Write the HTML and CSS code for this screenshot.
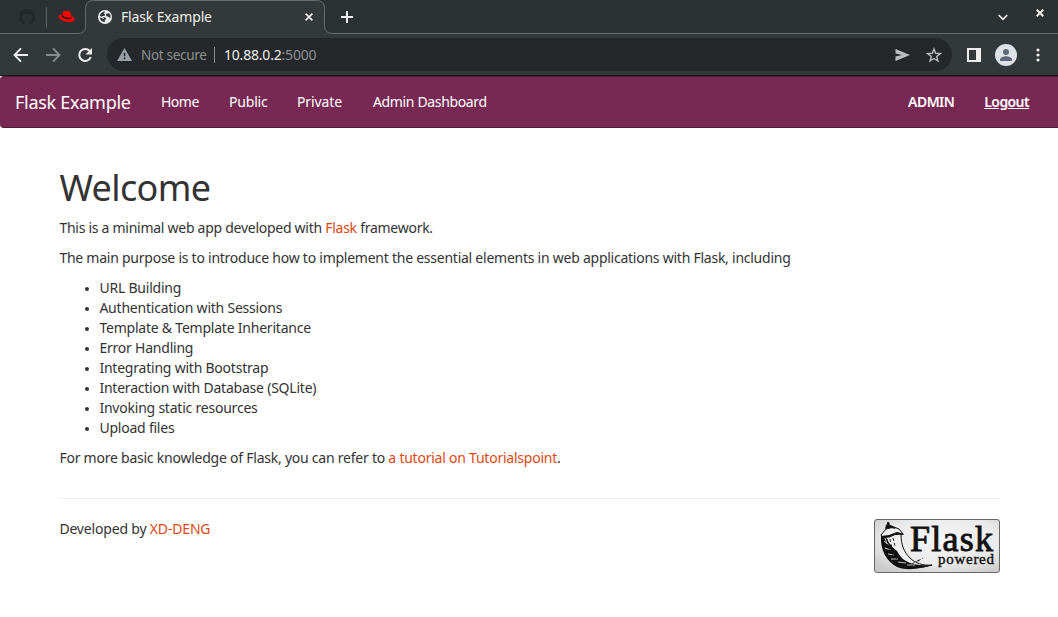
FILE: index.html
```html
<!DOCTYPE html>
<html lang="en">
<head>
<meta charset="utf-8">
<title>Flask Example</title>
<link rel="stylesheet" href="styles.css">
</head>
<body>
<header class="browser">
  <div class="tabs">
    <div class="pinned">
      <svg class="github" width="16" height="16" viewBox="0 0 16 16"><path fill="#232729" d="M8 0a8 8 0 0 0-2.5 15.600c.4 0 .5-.2.500-.4v-1.500c-2 .4-2.600-.9-2.700-1-.3-.5-.6-.8-.9-1 .8-.3 1.400.5 1.700 1 .5.700 1.200.7 2 .5.1-.5.300-.8.500-1C4.500 12 3 11.300 3 8.200c0-.8.300-1.500.8-2-.2-.700-.1-1.400.1-2 .7 0 1.400.4 2.100.8a7 7 0 0 1 4 0c.700-.4 1.400-.8 2.100-.8.2.6.300 1.300.1 2 .5.500.8 1.200.8 2 0 3.100-1.600 3.800-3.600 4 .3.300.6.800.6 1.500v1.500c0 .2.100.5.500.4A8 8 0 0 0 8 0z"/></svg>
      <i class="divider"></i>
      <svg class="hat" width="17" height="14" viewBox="0 0 17 14"><path fill="#f00" d="M4.200 5.500C4.600 3 5 1 6 .8c1 0 1.300.5 2.200.4 1.200-.2 2-.5 3.200.2 1.400.8 1.500 2.800 2 4.600 1.900.7 3.200 2 3.100 3.400-.2 2-3.200 3-6.300 2.700C5.800 11.700.600 9 .5 6.500c0-1.400 1.700-1.800 3.700-1z"/><path fill="none" stroke="#111" stroke-width="1.400" d="M3.800 5.500c1.600 2.300 7 4.300 9.700 2.300"/></svg>
    </div>
    <svg class="tab-outline" width="1058" height="34" viewBox="0 0 1058 34"><path fill="#33393b" d="M78 34q7.500 0 7.500-7V8.500q0-8 8-8H316.500q8 0 8 8V26q0 8 8 8z"/><path fill="none" stroke="#686c6d" d="M0 33.500H78q7.500 0 7.500-7V8.500q0-8 8-8H316.500q8 0 8 8V25.500q0 8 8 8H1058"/></svg>
    <div class="tab">
      <svg width="14" height="14" viewBox="0 0 14 14"><circle cx="7" cy="7" r="7" fill="#eeeeec"/><path fill="#33393b" d="M7.200 1.500 6 3.500l1.200 1.200-.8 1.200-2.400.1.500 1.200H7l1.300 1.500-1.500 1.500v2c-2.700-.2-5-2-5.200-4.600l2.600.5.500 1 1.400-.8L4.700 7 3 6.600 1.700 5.600C2.400 3.200 4.400 1.500 7.200 1.500zM9 3.200l1 .4 1-.6 1.200 1.700.5 3-1.700-.1-1-1.200-1.700-.2-.4-1.500z"/></svg>
      <span class="tab-title">Flask Example</span>
      <svg class="tab-close" width="8" height="8" viewBox="0 0 8 8"><path stroke="#eeeeec" stroke-width="1.700" d="M.6.6l6.800 6.800M7.400.6.600 7.400"/></svg>
    </div>
    <svg class="plus" width="12" height="12" viewBox="0 0 12 12"><path stroke="#eeeeec" stroke-width="2" d="M6 0v12M0 6h12"/></svg>
    <div class="window-buttons">
      <svg width="10" height="7" viewBox="0 0 10 7"><path fill="none" stroke="#eeeeec" stroke-width="1.700" d="M.7 1l4.300 4.300L9.300 1"/></svg>
      <svg class="window-close" width="8" height="8" viewBox="0 0 8 8"><path stroke="#eeeeec" stroke-width="2" d="M.7.7l6.600 6.600M7.300.7.700 7.300"/></svg>
    </div>
  </div>
  <div class="toolbar">
    <svg width="16" height="16" viewBox="0 0 16 16"><path fill="none" stroke="#eeeeec" stroke-width="1.900" d="M15 8H2.500M8 1.300 1.500 8 8 14.700"/></svg>
    <svg width="16" height="16" viewBox="0 0 16 16"><path fill="none" stroke="#898c8c" stroke-width="1.900" d="M1 8h12.500M8 1.300 14.500 8 8 14.700"/></svg>
    <svg width="16" height="16" viewBox="0 0 16 16"><path fill="none" stroke="#eeeeec" stroke-width="2" d="M13.800 10.200A6 6 0 1 1 12.600 3.800L14 5.200"/><path fill="#eeeeec" d="M15 1v6.500H8.500z"/></svg>
    <div class="address">
      <svg width="15" height="13" viewBox="0 0 15 13"><path fill="#9aa0a6" d="M7.500 0 15 13H0z"/><path stroke="#24282a" stroke-width="1.600" d="M7.500 4.700v3.600M7.500 9.500v1.700"/></svg>
      <span class="secure">Not secure</span>
      <i class="bar"></i>
      <span class="url">10.88.0.2<span class="port">:5000</span></span>
      <svg class="send" width="15" height="12" viewBox="0 0 15 12"><path fill="#bbbdbd" d="M.5 0 15 6 .5 12V7.500L7 6 .5 4.500z"/></svg>
      <svg width="16" height="16" viewBox="0 0 16 16"><path fill="none" stroke="#bbbdbd" stroke-width="1.400" d="m8 2 1.700 4.300 4.600.3-3.600 2.900 1.200 4.500L8 11.500 4.100 14l1.200-4.500-3.600-2.900 4.600-.3z"/></svg>
    </div>
    <svg class="panel" width="14" height="14" viewBox="0 0 14 14"><path fill="#eeeeec" fill-rule="evenodd" d="M0 0h14v14H0zM2 2v10h7V2z"/></svg>
    <svg class="avatar" width="22" height="22" viewBox="0 0 22 22"><circle cx="11" cy="11" r="11" fill="#dee1e6"/><circle cx="11" cy="8" r="3" fill="#5f6778"/><path fill="#5f6778" d="M5 17v-1.500C5 13.300 9 12.300 11 12.300s6 1 6 3.200V17z"/></svg>
    <svg class="dots" width="4" height="14" viewBox="0 0 4 14"><g fill="#eeeeec"><circle cx="2" cy="2" r="1.600"/><circle cx="2" cy="7" r="1.600"/><circle cx="2" cy="12" r="1.600"/></g></svg>
  </div>
</header>
<nav class="navbar">
  <a class="brand">Flask Example</a>
  <a class="home">Home</a><a class="public">Public</a><a class="private">Private</a><a class="dashboard">Admin Dashboard</a>
  <span class="user">ADMIN</span><a class="logout">Logout</a>
</nav>
<main class="container">
  <h1>Welcome</h1>
  <p class="intro">This is a minimal web app developed with <a>Flask</a> framework.</p>
  <p class="purpose">The main purpose is to introduce how to implement the essential elements in web applications with Flask, including</p>
  <ul>
    <li>URL Building</li>
    <li>Authentication with Sessions</li>
    <li>Template &amp; Template Inheritance</li>
    <li>Error Handling</li>
    <li>Integrating with Bootstrap</li>
    <li>Interaction with Database (SQLite)</li>
    <li>Invoking static resources</li>
    <li>Upload files</li>
  </ul>
  <p class="more">For more basic knowledge of Flask, you can refer to <a>a tutorial on Tutorialspoint</a>.</p>
  <hr>
  <footer>
    <p class="credit">Developed by <a>XD-DENG</a></p>
    <svg class="badge" width="127" height="55" viewBox="0 0 127 55">
      <defs><radialGradient id="silver" cx=".55" cy=".4" r=".7"><stop offset="0" stop-color="#f6f6f6"/><stop offset=".65" stop-color="#eaeaea"/><stop offset="1" stop-color="#cbcbcb"/></radialGradient></defs>
      <rect x=".5" y=".5" width="125" height="53" rx="2.500" fill="url(#silver)" stroke="#666"/>
      <path fill="#eee" stroke="#111" stroke-width="1" d="M8 17c0 12 5 22 14 28 9 5 22 5 36 1-9 1-17-2-22-7-6-6-9-13-9-24z"/>
      <path fill="#111" d="M7 17c-1 14 6 26 16 31 10 4 22 2 36-2-12 1-20 0-27-4-4-2-7-6-9-10-5-4-9-8-11-15z"/>
      <path fill="#eee" stroke="#111" stroke-width="1" d="M7 16 12 10l8-2 5 2 4 5-6-1-7 4-8 0z"/>
      <path fill="#111" d="m11 10 1-4 1-1V3h2l1 3 3 1 3 3-5-1zM7 17l8-1 8-3 7 2-1 1-6-1-8 3-8 1z"/>
      <path fill="none" stroke="#eee" stroke-width=".8" d="m10 22 5 4m-4 3 6 2m-3 4 6 1m-3 4 7 0m0 3 8 1M33 46l8 0M11 19l2 6"/>
      <path fill="none" stroke="#111" stroke-width=".9" stroke-dasharray="3 2" d="M13 20c1 8 4 15 10 20M16 20c1 8 3 13 9 18M19 19l2 8M44 42l5-3M38 45l7-4"/>
      <text class="badge-name" x="36" y="32" textLength="83" lengthAdjust="spacing">Flask</text>
      <text class="badge-sub" x="64" y="45" textLength="56" lengthAdjust="spacing">powered</text>
    </svg>
  </footer>
</main>
</body>
</html>
```
FILE: styles.css
```css
* { box-sizing: border-box; }
body { margin: 0; background: #fff; color: #333; font: 14px/20px "Noto Sans", "Open Sans", sans-serif; overflow: hidden; }
svg { display: block; flex: none; }
.browser { height: 76px; background: #33393b; border-bottom: 1px solid #171a1b; }
.tabs { position: relative; height: 34px; display: flex; background: #2c3133; }
.tab-outline { position: absolute; left: 0; top: 0; }
.pinned { width: 85px; display: flex; align-items: center; padding-left: 19px; }
.divider { width: 1px; height: 21px; margin: 0 11px; background: #5f6364; }
.tab { position: relative; width: 240px; display: flex; align-items: center; padding: 0 12px 0 13px; }
.tab-title { margin-left: 9px; color: #eeeeec; font-size: 14px; letter-spacing: -.15px; }
.tab-close { margin-left: auto; }
.plus { position: relative; align-self: center; margin-left: 16px; }
.window-buttons { position: relative; display: flex; align-items: center; margin-left: auto; padding-right: 14px; gap: 28px; }
.window-close { margin-bottom: 8px; }
.toolbar { height: 41px; display: flex; align-items: center; padding: 0 0 0 13px; gap: 16px; }
.address { flex: none; height: 33px; width: 845px; margin-left: -2px; border-radius: 17px; background: #24282a; display: flex; align-items: center; padding: 0 10px; }
.secure { width: 66px; margin-left: 9px; color: #8c8f90; font-size: 13.5px; letter-spacing: -.3px; white-space: nowrap; }
.bar { width: 1px; height: 16px; margin: 0 9px 0 7px; background: #8c8f90; }
.url { color: #eeeeec; letter-spacing: -.2px; }
.port { color: #8c8f90; }
.send { margin: 0 16px 0 auto; }
.panel { margin-left: -1px; }
.avatar { margin: 0 -1px 0 -2px; }
.dots { margin-left: 4px; }
.navbar { height: 52px; padding: 0 14px 0 15px; background: #772953; border: solid #4f1c38; border-width: 1px 0; border-radius: 4px 0 0 4px; display: flex; align-items: center; color: #fff; white-space: nowrap; }
.navbar a, .user { padding: 0 15px; }
.navbar .brand { width: 131px; font-size: 18px; letter-spacing: -.28px; padding-left: 0; }
.navbar .home { width: 68px; letter-spacing: -.5px; }
.navbar .public { width: 68px; letter-spacing: -.2px; }
.navbar .private { width: 76px; letter-spacing: -.1px; }
.navbar .dashboard { letter-spacing: -.35px; }
.user { margin-left: auto; font-weight: 600; letter-spacing: -.55px; }
.logout { font-weight: 600; letter-spacing: -.6px; text-decoration: underline; }
.container { width: 940.6px; margin-left: 59.4px; padding-top: 20px; }
.container a { color: #dd4814; }
h1 { margin: 20px 0 10px; font-size: 36px; line-height: 40px; font-weight: 400; letter-spacing: -.6px; }
p { margin: 0 0 10px; white-space: nowrap; }
.intro { letter-spacing: -.27px; }
.purpose { letter-spacing: -.247px; }
.more { letter-spacing: -.235px; }
.credit { letter-spacing: -.18px; }
ul { margin: 0 0 10px; padding-left: 40px; letter-spacing: -.22px; list-style: none; }
li { position: relative; }
li::before { content: ""; position: absolute; left: -14.4px; top: 9px; width: 4px; height: 4px; border-radius: 2px; background: #333; }
hr { margin: 30px 0 20px; border: 0; border-top: 1px solid #eee; }
footer { display: flex; justify-content: space-between; margin-right: -1px; }
.badge { overflow: visible; }
.badge-name { font: 36px/1 "Liberation Serif", serif; fill: #111; stroke: #111; stroke-width: .9px; }
.badge-sub { font: 15px/1 "Liberation Serif", serif; fill: #111; stroke: #111; stroke-width: .4px; }
```
